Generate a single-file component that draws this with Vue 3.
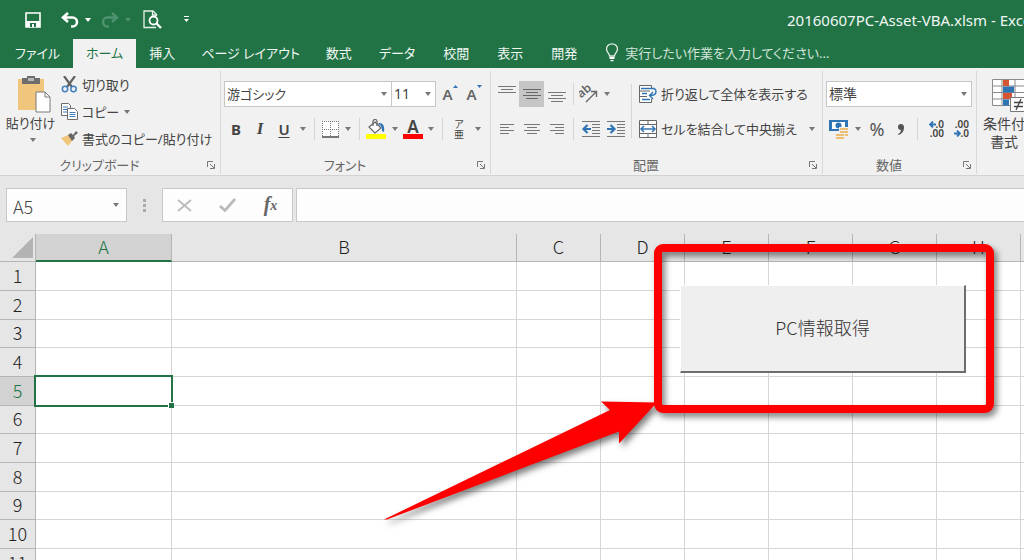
<script setup>
import { ref } from 'vue'

const tabs = ['ファイル', 'ホーム', '挿入', 'ページ レイアウト', '数式', 'データ', '校閲', '表示', '開発']
const activeTab = ref('ホーム')
const columns = ['A', 'B', 'C', 'D', 'E', 'F', 'G', 'H', 'I']
const rows = Array.from({ length: 12 }, (_, i) => i + 1)
const activeRow = ref(5)
const activeCol = ref('A')
const select = (c, r) => {
  activeCol.value = c
  activeRow.value = r
}
</script>

<template>
  <div class="excel">
    <header class="titlebar">
      <div class="quick">
        <button class="save" aria-label="上書き保存">
          <svg width="16" height="16" viewBox="0 0 16 16"><path d="M1 1h14v14H1z" fill="none" stroke="#fff" stroke-width="1.6" /><path d="M1 9h14v6H1z" fill="#fff" /><path d="M5 11h6v4H9v-3H7v3H5z" fill="#217346" /></svg>
        </button>
        <button class="undo" aria-label="元に戻す">
          <svg width="18" height="16" viewBox="0 0 18 16"><path d="M2 5.500h9.500a4.500 4.500 0 0 1 0 9H10M7 1 2 5.500l5 4.500" fill="none" stroke="#fff" stroke-width="2.600" /></svg>
        </button>
        <button class="drop" aria-label="元に戻す履歴"><i class="caret light"></i></button>
        <button class="redo" aria-label="やり直し">
          <svg width="18" height="16" viewBox="0 0 18 16"><path d="M16 5.500H6.500a4.500 4.500 0 0 0 0 9H8M11 1l5 4.500-5 4.500" fill="none" stroke="#4f9270" stroke-width="2.400" /></svg>
        </button>
        <button class="drop" aria-label="やり直し履歴"><i class="caret dim"></i></button>
        <button class="preview" aria-label="印刷プレビュー">
          <svg width="19" height="20" viewBox="0 0 19 20"><path d="M13.500 6V4.500L10 1H1v16.500h12M9.500 1v4h4" fill="none" stroke="#e8f1ec" stroke-width="1.300" /><circle cx="10.500" cy="10.500" r="4" fill="#217346" stroke="#fff" stroke-width="1.800" /><path d="m13.500 13.500 4.500 4.500" stroke="#fff" stroke-width="2.400" /></svg>
        </button>
        <button class="custom" aria-label="クイック アクセスのカスタマイズ">
          <svg width="5" height="7" viewBox="0 0 5 7"><path d="M0 0h5v1H0zM0 3h5L2.500 6z" fill="#fff" /></svg>
        </button>
      </div>
      <h1>20160607PC-Asset-VBA.xlsm - Excel</h1>
    </header>

    <nav class="tabs">
      <button v-for="t in tabs" :key="t" :class="{ active: t === activeTab }" @click="activeTab = t">{{ t }}</button>
      <label class="tell">
        <svg width="14" height="19" viewBox="0 0 14 19"><path d="M4.500 13C4.500 10 1.500 9.500 1.500 6a5.500 5.200 0 0 1 11 0c0 3.500-3 4-3 7z" fill="none" stroke="#e3efe8" stroke-width="1.300" /><path d="M4.500 14h5v2h-5zM5.500 17h3v1.200h-3z" fill="#fff" /></svg>
        <input type="text" placeholder="実行したい作業を入力してください..." aria-label="操作アシスト" />
      </label>
    </nav>

    <section class="ribbon">
      <div class="group clipboard">
        <div class="body">
          <button class="paste">
            <svg width="34" height="38" viewBox="0 0 34 38"><path d="M1 4h26v31H1z" fill="#f0c57c" /><path d="M5 3h5V1h8v2h5v6H5z" fill="#6d6d6d" /><path d="M11 3h6v3h-6z" fill="#b7b7b7" /><path d="M19 17h9l5 5v15H19z" fill="#fff" stroke="#7a7a7a" /><path d="M28 17v5h5" fill="none" stroke="#7a7a7a" /></svg>
            <span>貼り付け</span>
            <i class="caret"></i>
          </button>
          <div class="cliplist">
            <button>
              <svg width="17" height="17" viewBox="0 0 17 17"><path d="m3 0 8 11M14 0 6 11" stroke="#626262" stroke-width="2.200" /><circle cx="4" cy="13" r="2.700" fill="none" stroke="#3f7fbf" stroke-width="1.500" /><circle cx="12.500" cy="13" r="2.700" fill="none" stroke="#3f7fbf" stroke-width="1.500" /></svg>
              <span>切り取り</span>
            </button>
            <button>
              <svg width="17" height="18" viewBox="0 0 17 18"><path d="M.5.5h7l2 2v10h-9z" fill="#fff" stroke="#6d6d6d" /><path d="M2 4h5M2 6.500h5M2 9h5" stroke="#3f7fbf" /><path d="M6.500 5.500h7l3 3v8h-10z" fill="#fff" stroke="#6d6d6d" /><path d="M8.500 9.500h6M8.500 11.500h6M8.500 13.500h6" stroke="#3f7fbf" /></svg>
              <span>コピー</span>
              <i class="caret"></i>
            </button>
            <button>
              <svg width="17" height="15" viewBox="0 0 17 15"><path d="m0 7 7-3 5 5-5 6z" fill="#f0c57c" /><path d="m7 4 3-2 2 2 3-4 2 2-4 3 1 2-3 3z" fill="#666" /></svg>
              <span>書式のコピー/貼り付け</span>
            </button>
          </div>
        </div>
        <footer><span>クリップボード</span><button class="launch" aria-label="クリップボード ウィンドウ"><svg width="8" height="8" viewBox="0 0 8 8"><path d="M.5 6V.5H6M3 3l4 4M7.500 3v4.500H3" fill="none" stroke="#777" /></svg></button></footer>
      </div>

      <div class="group font">
        <div class="body rows">
          <div class="row">
            <label class="combo family"><select aria-label="フォント"><option>游ゴシック</option></select><i class="caret"></i></label>
            <label class="combo size"><select aria-label="フォント サイズ"><option>11</option></select><i class="caret"></i></label>
            <button class="grow" aria-label="フォント サイズの拡大"><b>A</b><svg width="5" height="3" viewBox="0 0 5 3"><path d="M0 3h5L2.500 0z" fill="#2f75b5" /></svg></button>
            <button class="grow" aria-label="フォント サイズの縮小"><b>A</b><svg width="5" height="3" viewBox="0 0 5 3"><path d="M0 0h5L2.500 3z" fill="#2f75b5" /></svg></button>
          </div>
          <div class="row">
            <button class="b24"><b class="glyph">B</b></button>
            <button class="b24"><em class="glyph">I</em></button>
            <button class="b24"><u class="glyph">U</u></button>
            <button class="drop" aria-label="下線の種類"><i class="caret"></i></button>
            <span class="sep"></span>
            <button class="b22" aria-label="罫線"><svg width="17" height="17" viewBox="0 0 17 17"><path d="M0 0h17v17H0z" fill="#fff" /><path d="M.5 0v16M8.500 0v16M16.500 0v16M0 .5h17M0 8.500h17" stroke="#777" stroke-dasharray="1 1" /><path d="M0 16h17" stroke="#777" stroke-width="2" /></svg></button>
            <button class="drop" aria-label="罫線の種類"><i class="caret"></i></button>
            <span class="sep"></span>
            <button class="b24" aria-label="塗りつぶしの色"><svg width="20" height="20" viewBox="0 0 20 20"><path d="m9 3 6 6-6 5-6-6z" fill="#fff" stroke="#666" stroke-width="1.200" /><path d="M7 7V2.500a2 2 0 0 1 4 0V7" fill="none" stroke="#666" stroke-width="1.200" /><path d="M13 4c4 0 6 3 5 9l-2-1c0-4-1-6-4-7z" fill="#2f75b5" /><path d="M0 15h20v5H0z" fill="#ff0" /></svg></button>
            <button class="drop" aria-label="塗りつぶしの色の一覧"><i class="caret"></i></button>
            <button class="b22 fcolor" aria-label="フォントの色"><b>A</b><span></span></button>
            <button class="drop" aria-label="フォントの色の一覧"><i class="caret"></i></button>
            <span class="sep"></span>
            <button class="b24 ruby" aria-label="ふりがなの表示"><span>ア</span><span>亜</span></button>
            <button class="drop" aria-label="ふりがなの設定"><i class="caret"></i></button>
          </div>
        </div>
        <footer><span>フォント</span><button class="launch" aria-label="フォントの設定"><svg width="8" height="8" viewBox="0 0 8 8"><path d="M.5 6V.5H6M3 3l4 4M7.500 3v4.500H3" fill="none" stroke="#777" /></svg></button></footer>
      </div>

      <div class="group align">
        <div class="body">
          <div class="rows">
            <div class="row">
              <button class="b25" aria-label="上揃え"><svg width="18" height="18" viewBox="0 0 18 18"><path d="M0 1.500h18M3 4.500h12M0 7.500h18" stroke="#777" /></svg></button>
              <button class="b25 on" aria-label="上下中央揃え"><svg width="18" height="18" viewBox="0 0 18 18"><path d="M0 4.500h18M3 7.500h12M0 10.500h18M3 13.500h12" stroke="#666" /></svg></button>
              <button class="b25" aria-label="下揃え"><svg width="18" height="18" viewBox="0 0 18 18"><path d="M0 7.500h18M3 10.500h12M0 13.500h18M3 16.500h12" stroke="#777" /></svg></button>
              <span class="sep"></span>
              <button class="b22" aria-label="方向"><svg width="20" height="18" viewBox="0 0 20 18"><text x="0" y="10" transform="rotate(-40 6 9)" font-family="Noto Sans" font-size="12" font-weight="600" fill="#666">ab</text><path d="m7 17 10-10M12 6.500h5.500V12" fill="none" stroke="#666" stroke-width="1.400" /></svg></button>
              <button class="drop" aria-label="方向の一覧"><i class="caret"></i></button>
            </div>
            <div class="row">
              <button class="b25" aria-label="左揃え"><svg width="14" height="12" viewBox="0 0 14 12"><path d="M0 1.500h14M0 4.500h9M0 7.500h14M0 10.500h9" stroke="#777" /></svg></button>
              <button class="b25" aria-label="中央揃え"><svg width="16" height="12" viewBox="0 0 16 12"><path d="M0 1.500h16M3 4.500h10M0 7.500h16M3 10.500h10" stroke="#777" /></svg></button>
              <button class="b25" aria-label="右揃え"><svg width="14" height="12" viewBox="0 0 14 12"><path d="M0 1.500h14M5 4.500h9M0 7.500h14M5 10.500h9" stroke="#777" /></svg></button>
              <span class="sep"></span>
              <button class="b25" aria-label="インデントを減らす"><svg width="18" height="16" viewBox="0 0 18 16"><path d="M0 .5h18M10 3.500h8M10 6.500h8M10 9.500h8M10 12.500h8M0 15.500h18" stroke="#777" /><path d="M9 8H2M5.500 4 1.500 8l4 4" fill="none" stroke="#2f75b5" stroke-width="2.200" /></svg></button>
              <button class="b25" aria-label="インデントを増やす"><svg width="18" height="16" viewBox="0 0 18 16"><path d="M0 .5h18M10 3.500h8M10 6.500h8M10 9.500h8M10 12.500h8M0 15.500h18" stroke="#777" /><path d="M0 8h7M3.500 4l4 4-4 4" fill="none" stroke="#2f75b5" stroke-width="2.200" /></svg></button>
            </div>
          </div>
          <span class="sep tall"></span>
          <div class="rows">
            <div class="row">
              <button class="wide"><svg width="20" height="18" viewBox="0 0 20 18"><path d="M13.500 4V.5h-12v17h12V14M1 6h11M1 11.500h8" fill="#fff" stroke="#666" /><path d="M3 3.500h13a3 3 0 0 1 2 3c0 3-2 4-6 4M4 8.500h5M4 14.500h8M15 7l-3.500 3.500L15 14" fill="none" stroke="#2f75b5" stroke-width="1.400" /></svg><span>折り返して全体を表示する</span></button>
            </div>
            <div class="row">
              <button class="wide"><svg width="20" height="20" viewBox="0 0 20 20"><path d="M1.500 1.500h17v17h-17zM1 5.500h18M1 14.500h18M10 1v4M10 15v4" fill="#fff" stroke="#666" /><path d="M3 10h14M6 7l-3 3 3 3M14 7l3 3-3 3" fill="none" stroke="#2f75b5" stroke-width="1.500" /></svg><span>セルを結合して中央揃え</span></button>
              <button class="drop" aria-label="結合の一覧"><i class="caret"></i></button>
            </div>
          </div>
        </div>
        <footer><span>配置</span><button class="launch" aria-label="配置の設定"><svg width="8" height="8" viewBox="0 0 8 8"><path d="M.5 6V.5H6M3 3l4 4M7.500 3v4.500H3" fill="none" stroke="#777" /></svg></button></footer>
      </div>

      <div class="group number">
        <div class="body rows">
          <div class="row">
            <label class="combo format"><select aria-label="表示形式"><option>標準</option></select><i class="caret"></i></label>
          </div>
          <div class="row">
            <button class="b25" aria-label="通貨表示形式"><svg width="20" height="20" viewBox="0 0 20 20"><path d="M0 1h19v11H0z" fill="#2f75b5" /><path d="M3 3h13v7H3z" fill="#fff" /><circle cx="9.500" cy="6.500" r="3" fill="#2f75b5" /><path d="M10 8h9v9h-3v3H6v-6h4z" fill="#f0f0f0" /><path d="M11 9h8v2h-8zM11 12h8v2h-8zM7 15h8v2H7zM16 15h3v2h-3zM7 18h8v2H7z" fill="#ecbd72" /></svg></button>
            <button class="drop" aria-label="通貨の一覧"><i class="caret"></i></button>
            <button class="b24 percent">%</button>
            <button class="b24" aria-label="桁区切りスタイル"><svg width="6" height="11" viewBox="0 0 6 11"><path d="M3 0c2 0 3 1.200 3 3.500C6 7 4 10 .5 11l-.5-1c2-1 3-2.500 3-4a2.800 2.800 0 0 1 0-6" fill="#555" /></svg></button>
            <span class="sep"></span>
            <button class="b25 decimals" aria-label="小数点以下の表示桁数を増やす"><span><svg width="7" height="7" viewBox="0 0 7 7"><path d="M7 3.500H1M4 .5l-3 3 3 3" fill="none" stroke="#2f75b5" stroke-width="1.800" /></svg>.0</span><span>.00</span></button>
            <button class="b25 decimals" aria-label="小数点以下の表示桁数を減らす"><span>.00</span><span><svg width="7" height="7" viewBox="0 0 7 7"><path d="M0 3.500h6M3 .5l3 3-3 3" fill="none" stroke="#2f75b5" stroke-width="1.800" /></svg>.0</span></button>
          </div>
        </div>
        <footer><span>数値</span><button class="launch" aria-label="表示形式の設定"><svg width="8" height="8" viewBox="0 0 8 8"><path d="M.5 6V.5H6M3 3l4 4M7.500 3v4.500H3" fill="none" stroke="#777" /></svg></button></footer>
      </div>

      <div class="group styles">
        <button class="conditional">
          <svg width="36" height="34" viewBox="0 0 36 34"><path d="M.5.5h35v26H.5z" fill="#fff" /><path d="M.5.5h35v26H.5zM0 7h36M0 13.500h36M0 20h36M10 0v27M23 0v27" fill="none" stroke="#8a8a8a" /><path d="M11 1h6v6h-6zM11 14h9v6h-9z" fill="#d65532" /><path d="M11 7.500h11v6H11zM11 20.500h6v6h-6z" fill="#2f75b5" /><path d="M18.500 18.500h16v14h-16z" fill="#fff" stroke="#777" /><path d="M22 23.500h9M22 27.500h9M29 20l-5 11" stroke="#444" stroke-width="1.300" /></svg>
          <span>条件付き</span>
          <span>書式<i class="caret"></i></span>
        </button>
      </div>
    </section>

    <section class="formula">
      <div class="namebox"><input :value="activeCol + activeRow" aria-label="名前ボックス" /><button aria-label="名前の一覧"><i class="caret"></i></button></div>
      <span class="grip"><i></i><i></i><i></i></span>
      <div class="actions">
        <button aria-label="キャンセル"><svg width="15" height="13" viewBox="0 0 15 13"><path d="m1 1 13 11M14 1 1 12" stroke="#bbb" stroke-width="1.800" /></svg></button>
        <button aria-label="入力"><svg width="17" height="14" viewBox="0 0 17 14"><path d="m1 8 5 4.500L16 1" fill="none" stroke="#bbb" stroke-width="2.800" /></svg></button>
        <button class="fx" aria-label="関数の挿入">f<small>x</small></button>
      </div>
      <input class="bar" aria-label="数式バー" />
    </section>

    <main class="sheet">
      <table>
        <colgroup><col class="c-row" /><col v-for="c in columns" :key="c" :class="'c-' + c" /></colgroup>
        <thead>
          <tr>
            <th class="corner"><svg width="21" height="21" viewBox="0 0 21 21"><path d="M21 0v21H0z" fill="#b3b3b3" /></svg></th>
            <th v-for="c in columns" :key="c" :class="{ on: c === activeCol }">{{ c }}</th>
          </tr>
        </thead>
        <tbody>
          <tr v-for="r in rows" :key="r">
            <th :class="{ on: r === activeRow }">{{ r }}</th>
            <td v-for="c in columns" :key="c" :class="{ cursor: c === activeCol && r === activeRow }" @click="select(c, r)"></td>
          </tr>
        </tbody>
      </table>
      <button class="macro">PC情報取得</button>
      <svg class="marks" width="1024" height="326" viewBox="0 0 1024 326">
        <rect x="658" y="14" width="332" height="161" rx="5" fill="none" stroke="#f00" stroke-width="8" />
        <path d="M384 285.500 610 176l-9-8.500 56 1-38 41v-12L387 285.500z" fill="#f00" />
      </svg>
    </main>
  </div>
</template>

<style>
body {
  margin: 0;
}
</style>

<style scoped>
.excel {
  display: flex;
  flex-direction: column;
  height: 100vh;
  overflow: hidden;
  background: #e6e6e6;
  color: #444;
  font-family: "Noto Sans", "Noto Sans CJK JP", sans-serif;
  font-size: 14px;
  line-height: 20px;
  font-feature-settings: "palt";
}
* {
  box-sizing: border-box;
}
button,
input,
select {
  margin: 0;
  padding: 0;
  border: 0;
  border-radius: 0;
  background: none;
  color: inherit;
  font: inherit;
  font-feature-settings: inherit;
  outline: none;
}
button {
  display: flex;
  align-items: center;
  justify-content: center;
  white-space: nowrap;
}
svg {
  display: block;
  flex: none;
}
.caret {
  display: inline-block;
  flex: none;
  border: solid transparent;
  border-width: 4px 3px 0;
  border-top-color: #777;
}
.caret.light {
  border-top-color: #fff;
}
.caret.dim {
  border-top-color: #4f9270;
}

.titlebar {
  display: grid;
  grid-template-columns: minmax(0, 787px) 1fr;
  align-items: center;
  flex: none;
  height: 39px;
  background: #217346;
  color: #f2f7f4;
}
.titlebar h1 {
  margin: 0;
  overflow: hidden;
  font-size: 15px;
  font-weight: 400;
  white-space: nowrap;
}
.quick {
  display: flex;
  align-items: center;
  padding-left: 25px;
}
.quick button {
  height: 24px;
}
.quick .undo,
.quick .redo {
  width: 18px;
}
.quick .save {
  width: 16px;
  margin-right: 20px;
}
.quick .drop {
  width: 18px;
  margin-right: 4px;
}
.quick .preview {
  width: 19px;
  margin-left: 2px;
}
.quick .custom {
  margin-left: 22px;
}

.tabs {
  display: flex;
  flex: none;
  height: 29px;
  padding-left: 2px;
  background: #217346;
  color: #f2f7f4;
  font-size: 13px;
}
.tabs > button {
  flex: none;
  padding: 0 13px 2px;
}
.tabs > button:nth-child(n + 6) {
  padding: 0 14px 2px;
}
.tabs > button.active {
  background: #f1f1f1;
  color: #217346;
}
.tell {
  display: flex;
  flex: 1;
  align-items: center;
  gap: 6px;
  padding: 0 0 2px 14px;
}
.tell input {
  flex: 1;
  min-width: 0;
}
.tell input::placeholder {
  color: #d3e4da;
  opacity: 1;
}

.ribbon {
  display: flex;
  flex: none;
  height: 108px;
  overflow: hidden;
  padding: 3px 0 1px;
  border-bottom: 1px solid #d2d2d2;
  background: #f1f1f1;
}
.group {
  display: flex;
  flex: none;
  flex-direction: column;
  border-right: 1px solid #d8d8d8;
}
.group footer {
  display: flex;
  align-items: center;
  padding-right: 5px;
  color: #666;
  font-size: 13px;
  line-height: 18px;
}
.group footer span {
  flex: 1;
  padding-right: 8px;
  text-align: center;
}
.launch {
  width: 8px;
  height: 8px;
}
.body {
  display: flex;
  flex: 1;
}
.rows {
  display: flex;
  flex-direction: column;
  gap: 9px;
  padding: 10px 3px 0;
}
.align .body > .rows {
  flex: none;
}
.row {
  display: flex;
  height: 26px;
}
.row button {
  height: 26px;
}
.b22 {
  width: 22px;
}
.b24 {
  width: 24px;
}
.b25 {
  width: 25px;
}
.drop {
  width: 14px;
}
.on {
  background: #c6c6c6;
}
.sep {
  width: 1px;
  margin: 2px 4px;
  background: #d5d5d5;
}
.sep.tall {
  height: 54px;
  margin: 13px 3px 0 0;
}

.clipboard {
  width: 221px;
  font-size: 13px;
}
.paste {
  flex-direction: column;
  justify-content: flex-start;
  width: 61px;
  padding-top: 4px;
}
.paste svg {
  margin-left: 6px;
}
.paste .caret {
  margin: 5px 0 0 4px;
}
.cliplist button {
  height: 27px;
  gap: 4px;
}
.cliplist .caret {
  margin-left: 1px;
}

.font {
  width: 270px;
}
.combo {
  position: relative;
  display: flex;
  border: 1px solid #c6c6c6;
  background: #fff;
}
.combo select {
  flex: 1;
  min-width: 0;
  padding-left: 2px;
  appearance: none;
}
.combo .caret {
  position: absolute;
  top: 10px;
  right: 4px;
  pointer-events: none;
}
.family {
  width: 168px;
  font-size: 13px;
}
.size {
  width: 45px;
  margin-left: -1px;
}
.grow {
  align-items: flex-start;
  width: 24px;
  margin-left: 2px;
  color: #666;
  font-size: 15px;
  line-height: 26px;
}
.grow + .grow {
  margin-left: 0;
}
.grow b,
.fcolor b {
  font-weight: 600;
}
.grow svg {
  margin-top: 4px;
}
.glyph {
  font-size: 15px;
}
em.glyph {
  font-family: "Liberation Serif", serif;
  font-size: 17px;
  font-weight: 700;
}
u.glyph {
  font-weight: 600;
  text-underline-offset: 2px;
}
.fcolor {
  flex-direction: column;
  font-size: 17px;
  line-height: 15px;
}
.fcolor span {
  width: 20px;
  height: 5px;
  background: #f00;
}
.ruby {
  flex-direction: column;
  font-size: 10px;
  line-height: 10px;
}

.align {
  width: 332px;
}
.wide {
  gap: 3px;
  font-size: 13px;
}
.wide + .drop {
  margin-left: 8px;
}

.number {
  width: 154px;
}
.format {
  width: 146px;
}
.percent {
  color: #555;
  font-size: 18px;
}
.decimals {
  flex-direction: column;
  align-items: flex-end;
  padding-right: 3px;
  font-size: 10px;
  font-weight: 600;
  line-height: 9px;
}
.decimals span {
  display: flex;
  align-items: center;
}
.styles {
  border: 0;
}
.conditional {
  flex-direction: column;
  padding: 8px 6px 0;
  line-height: 18px;
}
.conditional svg {
  margin-bottom: 2px;
}
.conditional .caret {
  margin: 0 0 3px 6px;
}

.formula {
  display: flex;
  flex: none;
  height: 58px;
  padding: 12px 0 12px 6px;
}
.namebox,
.actions,
.bar {
  border: 1px solid #c8c8c8;
  background: #fdfdfd;
}
.namebox {
  display: flex;
  width: 121px;
}
.namebox input {
  flex: 1;
  min-width: 0;
  padding: 1px 0 0 6px;
  font-family: "Noto Sans CJK JP", sans-serif;
  font-size: 18px;
  font-weight: 300;
}
.namebox button {
  width: 21px;
}
.grip {
  display: flex;
  flex-direction: column;
  align-items: center;
  justify-content: center;
  gap: 2px;
  width: 35px;
}
.grip i {
  width: 3px;
  height: 3px;
  background: #aaa;
}
.actions {
  display: flex;
  width: 131px;
}
.actions button {
  flex: 1;
}
.actions .fx {
  padding-bottom: 2px;
  color: #666;
  font-family: "Liberation Serif", serif;
  font-size: 20px;
  font-style: italic;
  font-weight: 700;
}
.fx small {
  padding-top: 4px;
  font-size: 14px;
}
.formula .bar {
  flex: 1;
  margin-left: 3px;
  padding: 0 6px;
  border-right: 0;
}

.sheet {
  position: relative;
  flex: 1;
  min-height: 0;
  overflow: hidden;
}
table {
  table-layout: fixed;
  width: 1105px;
  border-collapse: separate;
  border-spacing: 0;
  background: #fff;
  color: #222;
  font-family: "Noto Sans CJK JP", sans-serif;
  font-size: 18px;
  line-height: 20px;
}
.c-row {
  width: 36px;
}
.c-A {
  width: 136px;
}
.c-B {
  width: 345px;
}
th,
td {
  height: 29px;
  padding: 0;
  border: solid #d6d6d6;
  border-width: 0 1px 1px 0;
}
tr:nth-child(3n) th,
tr:nth-child(3n) td {
  height: 28px;
}
th {
  padding-bottom: 3px;
  background: #e6e6e6;
  border-color: #b5b5b5;
  font-weight: 300;
}
thead th {
  height: 28px;
}
thead th.on {
  border-bottom: 2px solid #217346;
}
th.on {
  background: #d2d2d2;
  color: #217346;
}
.corner svg {
  margin: 3px 2px 0 auto;
}
.cursor {
  position: relative;
}
.cursor::before {
  content: "";
  position: absolute;
  inset: -2px;
  border: 2px solid #217346;
}
.cursor::after {
  content: "";
  position: absolute;
  right: -3px;
  bottom: -3px;
  width: 5px;
  height: 5px;
  border: solid #fff;
  border-width: 1px 0 0 1px;
  background: #217346;
}
.macro {
  position: absolute;
  top: 51px;
  left: 680px;
  width: 286px;
  height: 88px;
  padding-bottom: 3px;
  border: solid;
  border-width: 1px 2px 2px 1px;
  border-color: #fff #6d6d6d #6d6d6d #fff;
  background: #efefef;
  color: #333;
  font-family: "Noto Sans CJK JP", sans-serif;
  font-size: 18px;
  font-weight: 300;
  font-feature-settings: normal;
}
.marks {
  position: absolute;
  top: 0;
  left: 0;
  filter: drop-shadow(3px 4px 3px rgba(0, 0, 0, 0.5));
  pointer-events: none;
}
</style>
